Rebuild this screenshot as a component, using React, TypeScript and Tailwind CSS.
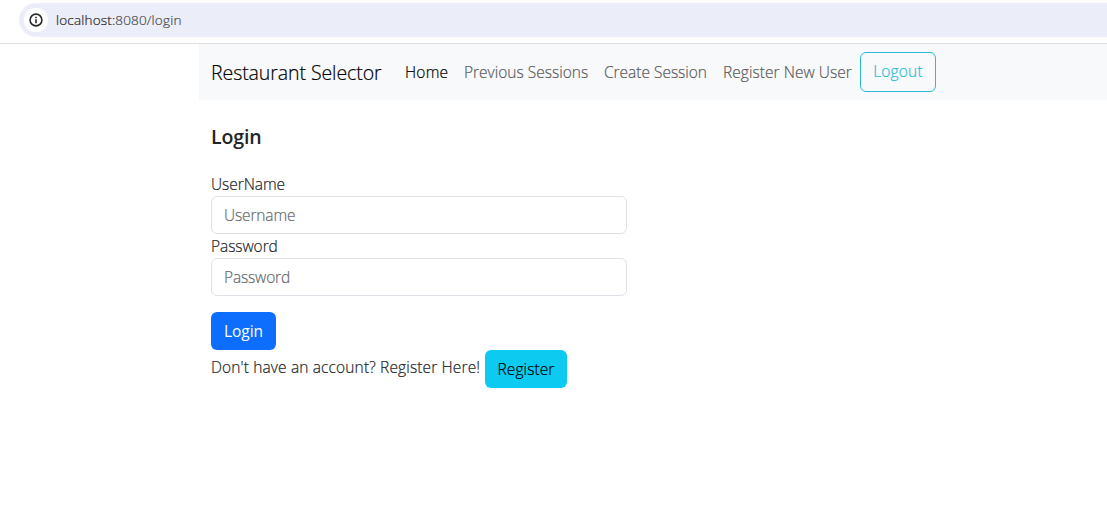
import React from "react";

const navLinks = [
  { label: "Previous Sessions", style: "w-[140px] tracking-[0px]" },
  { label: "Create Session", style: "w-[119px] tracking-[-0.02px]" },
  { label: "Register New User", style: "w-[145px] tracking-[0.05px]" },
];

function InfoIcon() {
  return (
    <svg width="14" height="14" viewBox="0 0 14 14" fill="none" stroke="#26282b" strokeWidth="1.6">
      <circle cx="7" cy="7" r="5.9" />
      <path d="M7 6.3v3.9M7 3.8v1.4" />
    </svg>
  );
}

function AddressBar() {
  return (
    <header className="h-11 border-b border-[#dcdddf] bg-white pt-[3px] pl-[19px]">
      <div className="flex h-[34px] items-center rounded-l-full bg-[#ebeef8] pl-[5px]">
        <span className="flex size-6 items-center justify-center rounded-full bg-white">
          <InfoIcon />
        </span>
        <span className="ml-2 text-[13.5px] leading-5 tracking-[0.18px] text-[#46484d]">
          <span className="text-[#1f2023]">localhost:</span>8080/login
        </span>
      </div>
    </header>
  );
}

function NavBar() {
  return (
    <nav className="flex h-14 items-center bg-[#f8f9fa] pl-3 whitespace-nowrap">
      <a className="w-[186px] pt-px text-[19.5px] leading-[30px] tracking-[-0.08px] text-black">Restaurant Selector</a>
      <a className="ml-2 w-[59px] text-[15.5px] leading-6 tracking-[0.2px] text-black">Home</a>
      {navLinks.map((link) => (
        <a key={link.label} className={`text-[15.5px] leading-6 text-[#5a5b5c] ${link.style}`}>
          {link.label}
        </a>
      ))}
      <button className="-ml-[8px] flex h-10 w-[76px] items-center justify-center rounded-md border border-[#2cb9d6] text-[15.5px] tracking-[0.2px] text-[#2cb9d6]">
        Logout
      </button>
    </nav>
  );
}

interface FieldProps {
  label: string;
  placeholder: string;
  type: string;
}

function Field({ label, placeholder, type }: FieldProps) {
  return (
    <label className="block">
      <span className="block h-6 text-[15.5px] leading-6 tracking-[-0.06px]">{label}</span>
      <input
        type={type}
        placeholder={placeholder}
        className="block h-[38px] w-[416px] rounded-md border border-[#dee2e6] bg-white px-3 text-[15.5px] tracking-[-0.15px] placeholder:text-[#65696d]"
      />
    </label>
  );
}

export default function App() {
  return (
    <div className="h-[510px] overflow-hidden bg-white font-['Open_Sans','Noto_Sans',sans-serif] font-light text-[#212529] [-webkit-text-stroke:0.2px]">
      <AddressBar />
      <div className="ml-[199px]">
        <NavBar />
        <main className="pt-[25px] pl-3">
          <h5 className="h-[47px] text-[19.5px] leading-6 font-semibold tracking-[-0.1px] [-webkit-text-stroke:0px]">Login</h5>
          <form onSubmit={(e) => e.preventDefault()}>
            <Field label="UserName" placeholder="Username" type="text" />
            <Field label="Password" placeholder="Password" type="password" />
            <button className="mt-4 flex h-[38px] w-[65px] items-center justify-center rounded-md bg-[#0d6efd] pt-0.5 text-[15.5px] font-normal text-white [-webkit-text-stroke:0px]">
              Login
            </button>
          </form>
          <div className="flex whitespace-nowrap">
            <span className="w-[274px] pt-[5px] text-[15.5px] leading-6 tracking-[0.14px]">
              Don't have an account? Register Here!
            </span>
            <button className="flex h-[38px] w-[82px] items-center justify-center rounded-md bg-[#0dcaf0] pt-0.5 text-[15.5px] tracking-[0.1px] text-black">
              Register
            </button>
          </div>
        </main>
      </div>
    </div>
  );
}
